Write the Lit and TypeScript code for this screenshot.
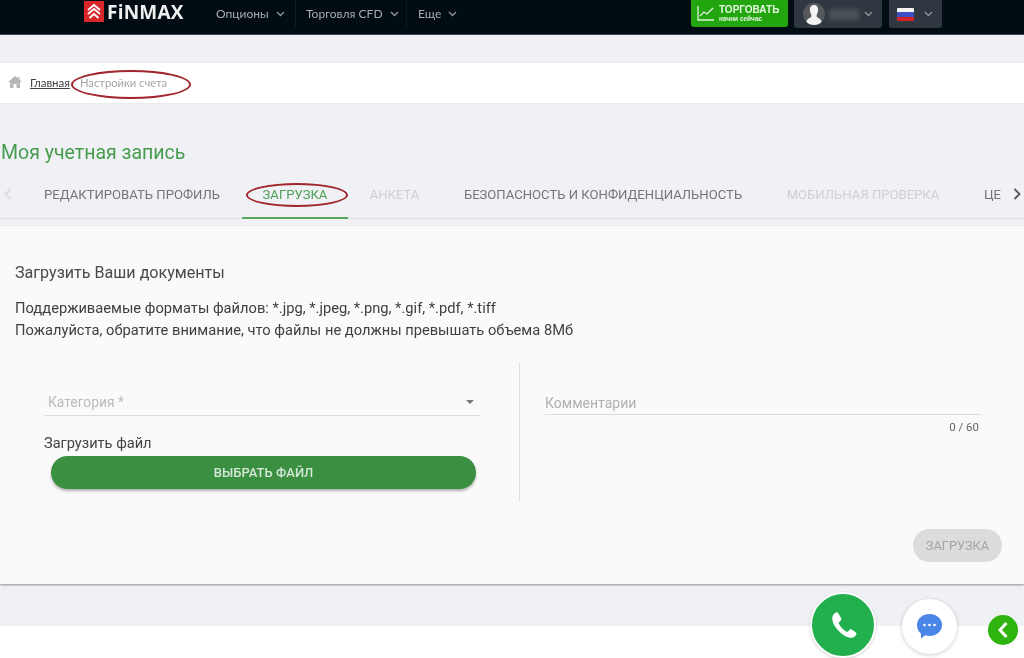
import { LitElement, html, css, svg } from "lit";
import { customElement } from "lit/decorators.js";

const chev = svg`<svg class="chev" width="9" height="6" viewBox="0 0 9 6"><path d="M1 1l3.500 3.500L8 1" fill="none" stroke="currentColor" stroke-width="1.400"/></svg>`;

@customElement("app-root")
export class AppRoot extends LitElement {
  static styles = css`
    :host { display: block; width: 1024px; height: 658px; overflow: hidden; position: relative; background: #f0f1f5; font-family: Roboto, "Liberation Sans", sans-serif; color: #444; filter: blur(0.6px); }
    * { box-sizing: border-box; }
    .top { height: 35px; background: #020c13; border-bottom: 1px solid #3a4650; display: flex; align-items: flex-start; padding-left: 84px; }
    .logo { display: flex; align-items: center; gap: 3px; width: 132px; height: 23px; }
    .logo-mark { width: 20px; height: 21px; background: #d8262a; display: flex; align-items: center; justify-content: center; }
    .logo-text { font-family: "Open Sans", "Liberation Sans", sans-serif; font-weight: 700; font-size: 19px; line-height: 24px; color: #eef0f0; letter-spacing: .2px; }
    .menu { display: flex; height: 27px; align-items: center; color: #a9adb0; font-size: 12px; font-family: Lato, "Liberation Sans", sans-serif; }
    .menu-item { display: flex; align-items: center; gap: 7px; height: 27px; }
    .menu-item:nth-child(1) { width: 80px; margin-right: 10px; border-right: 1px solid #0d1b24; }
    .menu-item:nth-child(2) { width: 101px; margin-right: 11px; border-right: 1px solid #0d1b24; }
    .chev { color: #8d9499; display: block; }
    .spring { flex: 1; }
    .trade { width: 97px; height: 27px; background: #22a50f; border-radius: 0 0 3px 3px; display: flex; align-items: center; gap: 4px; padding-left: 6px; color: #e5f5e0; }
    .trade b { display: block; font: 700 10px/11px "Liberation Sans", sans-serif; white-space: nowrap; }
    .trade span { display: block; font: 700 6.500px/8px "Liberation Sans", sans-serif; white-space: nowrap; }
    .pill { height: 28px; background: #2f3840; border-radius: 0 0 3px 3px; display: flex; align-items: center; }
    .user { width: 88px; margin-left: 6px; padding-left: 9px; gap: 4px; }
    .avatar { width: 22px; height: 22px; border-radius: 50%; background: #55595d; overflow: hidden; flex: none; }
    .blurname { width: 30px; height: 11px; background: #4a5158; margin-right: 1px; filter: blur(2px); }
    .lang { width: 53px; margin-left: 7px; padding-left: 8px; gap: 10px; margin-right: 82px; }
    .flag { width: 17px; height: 13px; flex: none; background: linear-gradient(#f5f5f5 0 33%, #3b4fc4 33% 66%, #d62028 66%); border-radius: 1px; }

    .sub { height: 28px; border-bottom: 2px solid #eceded; }
    .crumbs { height: 40px; background: #fff; display: flex; align-items: center; padding: 0 0 2px 8px; font-size: 11.200px; font-family: Lato, "Liberation Sans", sans-serif; position: relative; }
    .crumbs a { color: #3f4346; text-decoration: underline; margin-left: 8px; margin-right: 10px; font-size: 11.500px; }
    .crumbs span { color: #a3a5a7; }
    .ring { position: absolute; border: 2.300px solid #a0262b; border-radius: 50%; pointer-events: none; }
    .ring.r1 { left: 71px; top: 7px; width: 120px; height: 29px; }
    .crumb-edge { height: 1px; background: #eaebee; }

    .title { margin: 0; padding: 37px 0 0 1px; height: 66px; font: 400 19.500px/24px Roboto, "Liberation Sans", sans-serif; color: #459c4e; }
    .tabs { height: 49px; display: flex; align-items: stretch; border-bottom: 1px solid #dcdde1; font-size: 13.100px; color: #737578; }
    .arrow { width: 16px; flex: none; display: flex; align-items: center; justify-content: center; }
    .tab { flex: none; display: flex; align-items: center; justify-content: center; white-space: nowrap; }
    .tab.first { padding-left: 6px; }
    .tab.off { color: #cfd0d2; }
    .tab.on { color: #4c9f54; border-bottom: 2px solid #57a85e; position: relative; margin-bottom: -1px; padding-top: 1px; }
    .ring.r2 { left: 4px; top: 13px; width: 102px; height: 24px; }
    .card { margin-top: 7px; height: 358px; background: #fafafa; box-shadow: 0 1px 2px rgba(0,0,0,.4); padding: 36px 0 0 15px; position: relative; }
    .card h2 { margin: 0; font: 400 16.100px/21px Roboto, "Liberation Sans", sans-serif; color: #4a4a4a; }
    .card p { margin: 14px 0 0; font-size: 14.700px; line-height: 22px; color: #3f3f3f; }
    .form { display: flex; margin-top: 21px; height: 140px; }
    .left { width: 505px; padding: 0 0 0 29px; border-right: 1px solid #dedede; height: 140px; }
    .sel { width: 436px; height: 26px; margin-top: 28px; display: flex; align-items: center; justify-content: space-between; border-bottom: 1px solid #dcdcdc; padding: 0 3px 2px 4px; font-size: 13.800px; color: #bbb; }
    .sel i { width: 0; height: 0; border: 4px solid transparent; border-top: 4px solid #777; border-bottom: 0; margin-right: 3px; }
    .lbl { font-size: 14.600px; line-height: 18px; color: #444; margin-top: 18px; }
    .pick { width: 425px; height: 33px; margin: 4px 0 0 7px; border: 0; border-radius: 17px; background: #3b8f41; color: #d5e7d6; font: 500 13px/33px Roboto, "Liberation Sans", sans-serif; box-shadow: 0 2px 3px rgba(0,0,0,.3); display: block; padding: 0; }
    .right { padding: 28px 0 0 25px; flex: 1; }
    .com { width: 436px; height: 25px; border-bottom: 1px solid #dcdcdc; font-size: 14px; line-height: 26px; color: #b0b0b0; }
    .count { width: 436px; text-align: right; font-size: 11.500px; line-height: 12px; margin-top: 6px; color: #666; padding-right: 2px; }
    .send { position: absolute; right: 22px; bottom: 22px; width: 89px; height: 33px; border-radius: 17px; background: #dcdcdc; color: #a4a4a4; font-size: 12.800px; line-height: 33px; text-align: center; border: 0; padding: 0; font-family: Roboto, "Liberation Sans", sans-serif; }
    .bottom { position: absolute; left: 0; right: 0; top: 626px; height: 32px; background: #fff; }
    .fab { position: absolute; border-radius: 50%; display: flex; align-items: center; justify-content: center; }
    .phone { left: 810px; top: 592px; width: 66px; height: 66px; background: #22b04e; border: 2px solid #fff; box-shadow: 0 1px 3px rgba(0,0,0,.2); }
    .chat { left: 902px; top: 599px; width: 55px; height: 55px; background: #fff; box-shadow: 0 1px 4px rgba(0,0,0,.2); }
    .back { left: 988px; top: 615px; width: 30px; height: 30px; background: #2fb30f; }
  `;

  render() {
    return html`
      <div class="top">
        <div class="logo">
          <div class="logo-mark"><svg width="14" height="17" viewBox="0 0 14 17"><path d="M1 7l6-5 6 5M1 11l6-5 6 5M2.500 15l4.500-4 4.500 4" fill="none" stroke="#fff" stroke-width="1.800"/></svg></div>
          <div class="logo-text">FiNMAX</div>
        </div>
        <div class="menu">
          <div class="menu-item">Опционы ${chev}</div>
          <div class="menu-item">Торговля CFD ${chev}</div>
          <div class="menu-item">Еще ${chev}</div>
        </div>
        <div class="spring"></div>
        <div class="trade">
          <svg width="18" height="17" viewBox="0 0 18 17"><path d="M1 1v14h16M3 11l4-4 3 2 6-6" fill="none" stroke="#dff3da" stroke-width="1.300"/></svg>
          <div><b>ТОРГОВАТЬ</b><span>начни сейчас</span></div>
        </div>
        <div class="pill user">
          <div class="avatar"><svg width="22" height="22" viewBox="0 0 22 22"><path d="M11 2c3 0 4.500 2.500 4 6-.3 2-1.500 4-1.500 5 0 1.500 3.500 2 5 5v4H3.500v-4c1.500-3 5-3.500 5-5 0-1-1.200-3-1.500-5-.5-3.500 1-6 4-6z" fill="#f2f2f2"/></svg></div>
          <div class="blurname"></div>${chev}
        </div>
        <div class="pill lang"><div class="flag"></div>${chev}</div>
      </div>
      <div class="sub"></div>
      <div class="crumbs">
        <svg width="14" height="12" viewBox="0 0 14 12"><path d="M7 0L0 6h2v6h3.500V8h3v4H12V6h2l-2.500-2.200V1h-2v1z" fill="#b5b7b9"/></svg>
        <a>Главная</a><span>Настройки счета</span>
        <div class="ring r1"></div>
      </div>
      <div class="crumb-edge"></div>
      <h1 class="title">Моя учетная запись</h1>
      <div class="tabs">
        <div class="arrow" style="width:16px"><svg width="8" height="12" viewBox="0 0 8 12"><path d="M6.500 1L1.500 6l5 5" fill="none" stroke="#d8d9db" stroke-width="1.600"/></svg></div>
        <div class="tab first" style="width:226px">РЕДАКТИРОВАТЬ ПРОФИЛЬ</div>
        <div class="tab on" style="width:106px">ЗАГРУЗКА<div class="ring r2"></div></div>
        <div class="tab off" style="width:93px">АНКЕТА</div>
        <div class="tab" style="width:324px">БЕЗОПАСНОСТЬ И КОНФИДЕНЦИАЛЬНОСТЬ</div>
        <div class="tab off" style="width:196px">МОБИЛЬНАЯ ПРОВЕРКА</div>
        <div class="tab" style="width:49px;justify-content:flex-end;padding-right:9px">ЦЕ</div>
        <div class="arrow" style="width:14px"><svg width="8" height="12" viewBox="0 0 8 12"><path d="M1.500 1l5 5-5 5" fill="none" stroke="#55585b" stroke-width="1.800"/></svg></div>
      </div>
      <div class="card">
        <h2>Загрузить Ваши документы</h2>
        <p>Поддерживаемые форматы файлов: *.jpg, *.jpeg, *.png, *.gif, *.pdf, *.tiff<br>Пожалуйста, обратите внимание, что файлы не должны превышать объема 8Мб</p>
        <div class="form">
          <div class="left">
            <div class="sel">Категория *<i></i></div>
            <div class="lbl">Загрузить файл</div>
            <button class="pick">ВЫБРАТЬ ФАЙЛ</button>
          </div>
          <div class="right">
            <div class="com">Комментарии</div>
            <div class="count">0 / 60</div>
          </div>
        </div>
        <button class="send">ЗАГРУЗКА</button>
      </div>
      <div class="bottom"></div>
      <div class="fab phone"><svg width="33" height="33" viewBox="0 0 24 24"><path d="M6.600 2.500c-1.800.8-3 2.500-2.800 4.800.5 5.500 7 12.500 12.500 13.600 2.300.4 4-.6 5-2.400.3-.6.200-1.100-.3-1.500l-3-2.100c-.6-.4-1.200-.3-1.600.2l-1 1.200c-.3.400-.7.400-1.100.2-2.500-1.300-4.400-3.400-5.700-6-.2-.4-.1-.8.200-1.100l1.200-1c.5-.4.600-1 .3-1.600L8.200 3c-.4-.6-1-.8-1.600-.5z" fill="#fff"/></svg></div>
      <div class="fab chat"><svg width="27" height="25" viewBox="0 0 27 25"><path d="M13.500 0C20.500 0 26 4.700 26 11s-5.500 11-12.500 11c-1.500 0-3-.2-4.300-.7L5 24.500v-4.800C2.500 17.500 1 14.500 1 11 1 4.700 6.500 0 13.500 0z" fill="#4a86e8"/><circle cx="8.500" cy="11" r="1.300" fill="#fff"/><circle cx="13.500" cy="11" r="1.300" fill="#fff"/><circle cx="18.500" cy="11" r="1.300" fill="#fff"/></svg></div>
      <div class="fab back"><svg width="12" height="18" viewBox="0 0 12 18"><path d="M9.500 2L3 9l6.500 7" fill="none" stroke="#fff" stroke-width="3"/></svg></div>
    `;
  }
}
